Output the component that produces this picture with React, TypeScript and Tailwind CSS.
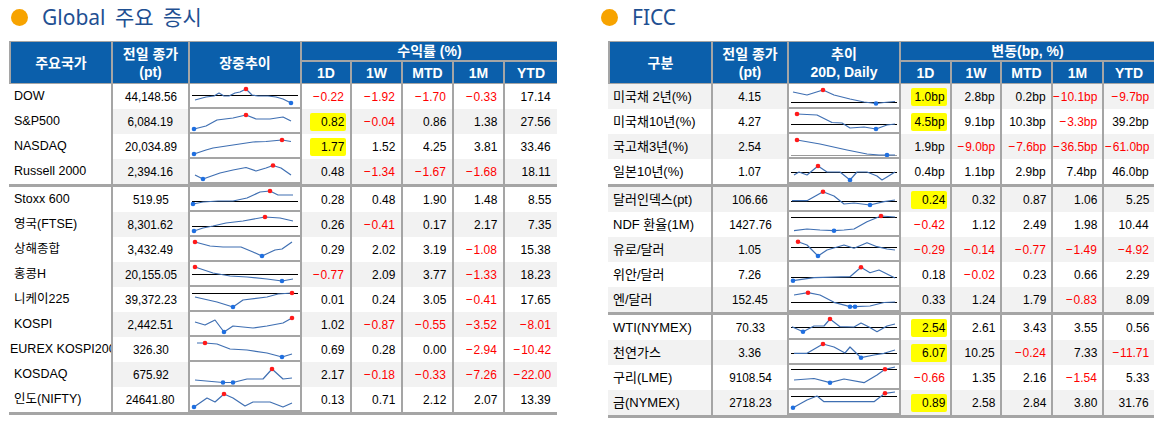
import React from 'react';

type Pt = [number, number];
type SparkDef = { axis?: number; axisGray?: boolean; pts: Pt[]; red: number[]; blue: number[] };
type Row = { name: string; price: string; spark: SparkDef; vals: string[]; hl?: boolean; tight?: boolean };

function Spark({ d }: { d: SparkDef }) {
  const pts = d.pts.map((p) => `${p[0] - 2},${p[1]}`).join(' ');
  return (
    <svg width="110" height="23" className="block">
      {d.axis !== undefined && (
        <line x1="2" x2="108" y1={Math.round(d.axis) + 0.5} y2={Math.round(d.axis) + 0.5} stroke={d.axisGray ? '#9a9a9a' : '#000'} strokeWidth="1" />
      )}
      <polyline points={pts} fill="none" stroke="#3f6fb2" strokeWidth="1.2" strokeLinejoin="round" />
      {d.red.map((i) => (
        <circle key={'r' + i} cx={d.pts[i][0] - 2} cy={d.pts[i][1]} r="2.3" fill="#ff1a1a" />
      ))}
      {d.blue.map((i) => (
        <circle key={'b' + i} cx={d.pts[i][0] - 2} cy={d.pts[i][1]} r="2.3" fill="#1f6fe0" />
      ))}
    </svg>
  );
}

function Val({ v, hl }: { v: string; hl?: boolean }) {
  const neg = v.startsWith('-');
  const body = neg ? v.slice(1) : v;
  const content = (
    <span className={`inline-block origin-right scale-x-[0.92] whitespace-nowrap ${neg ? 'text-[#ff0000]' : 'text-black'}`}>
      {neg && <span className="mr-[1px]">−</span>}
      {body}
    </span>
  );
  if (hl) {
    return (
      <span className="inline-flex justify-end bg-[#ffff00] w-[36px] h-[18px] items-center pr-[2px] -mr-[2px] rounded-[2px]">
        {content}
      </span>
    );
  }
  return content;
}

const leftRows: Row[][] = [
  [
    { name: 'DOW', price: '44,148.56', vals: ['-0.22', '-1.92', '-1.70', '-0.33', '17.14'], spark: { axis: 11, pts: [[7, 16], [18, 13], [26, 12], [31, 9], [36, 12], [41, 12], [47, 9], [52, 8], [58, 5], [64, 11], [70, 12], [80, 12], [88, 13], [95, 15], [103, 19]], red: [8], blue: [14] } },
    { name: 'S&P500', price: '6,084.19', hl: true, vals: ['0.82', '-0.04', '0.86', '1.38', '27.56'], spark: { pts: [[6, 20], [18, 17], [29, 11], [45, 9], [58, 6], [68, 10], [82, 10], [95, 8], [103, 12]], red: [4], blue: [0] } },
    { name: 'NASDAQ', price: '20,034.89', hl: true, vals: ['1.77', '1.52', '4.25', '3.81', '33.46'], spark: { pts: [[6, 20], [18, 16], [25, 14], [45, 11], [65, 8], [78, 7.5], [94, 6], [103, 7.5]], red: [6], blue: [0] } },
    { name: 'Russell 2000', price: '2,394.16', vals: ['0.48', '-1.34', '-1.67', '-1.68', '18.11'], spark: { pts: [[7, 16], [15, 20], [32, 14], [45, 11], [58, 8.5], [68, 12], [78, 9], [85, 6.5], [93, 9], [103, 16]], red: [7], blue: [1] } },
  ],
  [
    { name: 'Stoxx 600', price: '519.95', vals: ['0.28', '0.48', '1.90', '1.48', '8.55'], spark: { axis: 14, pts: [[5, 17], [15, 15], [30, 14], [45, 14], [59, 11], [72, 5], [82, 4], [90, 8], [105, 8]], red: [6], blue: [0] } },
    { name: '영국(FTSE)', price: '8,301.62', vals: ['0.26', '-0.41', '0.17', '2.17', '7.35'], spark: { axis: 14, pts: [[6, 19], [15, 16], [25, 14], [38, 11], [55, 9], [77, 5], [92, 6], [105, 9]], red: [5], blue: [0] } },
    { name: '상해종합', price: '3,432.49', vals: ['0.29', '2.02', '3.19', '-1.08', '15.38'], spark: { pts: [[7, 5], [22, 9], [35, 10], [53, 10], [65, 15], [74, 19], [87, 13], [94, 12], [104, 5]], red: [0], blue: [5] } },
    { name: '홍콩H', price: '20,155.05', vals: ['-0.77', '2.09', '3.77', '-1.33', '18.23'], spark: { axis: 12, pts: [[7, 5], [25, 11], [42, 14], [59, 15], [79, 17], [94, 19], [105, 17]], red: [0], blue: [5] } },
    { name: '니케이225', price: '39,372.23', vals: ['0.01', '0.24', '3.05', '-0.41', '17.65'], spark: { axis: 6, pts: [[7, 10], [29, 15], [45, 20], [55, 13], [79, 10], [90, 7], [104, 6]], red: [6], blue: [2] } },
    { name: 'KOSPI', price: '2,442.51', vals: ['1.02', '-0.87', '-0.55', '-3.52', '-8.01'], spark: { pts: [[7, 10], [17, 13], [27, 8], [36, 20], [45, 14], [65, 16], [79, 14], [95, 11], [104, 6]], red: [8], blue: [3] } },
    { name: 'EUREX KOSPI200', tight: true, price: '326.30', vals: ['0.69', '0.28', '0.00', '-2.94', '-10.42'], spark: { pts: [[9, 6], [17, 6], [29, 7], [42, 12], [59, 13], [79, 16], [94, 20], [104, 17]], red: [1], blue: [6] } },
    { name: 'KOSDAQ', price: '675.92', vals: ['2.17', '-0.18', '-0.33', '-7.26', '-22.00'], spark: { pts: [[7, 18], [35, 20.5], [45, 20.5], [59, 17], [75, 17], [84, 7], [95, 17], [104, 16]], red: [5], blue: [1, 2] } },
    { name: '인도(NIFTY)', price: '24641.80', vals: ['0.13', '0.71', '2.12', '2.07', '13.39'], spark: { pts: [[6, 20], [19, 11], [27, 15], [36, 7], [45, 11], [57, 19], [65, 15], [82, 15], [95, 20], [104, 16]], red: [3], blue: [0] } },
  ],
];

const rightRows: Row[][] = [
  [
    { name: '미국채 2년(%)', price: '4.15', hl: true, vals: ['1.0bp', '2.8bp', '0.2bp', '-10.1bp', '-9.7bp'], spark: { axis: 17.7, pts: [[6, 8], [20, 11], [36, 6], [47, 11], [63, 15], [77, 18], [89, 19.5], [97, 18.5], [108, 17.5]], red: [2], blue: [6] } },
    { name: '미국채10년(%)', price: '4.27', hl: true, vals: ['4.5bp', '9.1bp', '10.3bp', '-3.3bp', '39.2bp'], spark: { axis: 15, pts: [[10, 5], [30, 6], [45, 13.5], [55, 14], [63, 19], [77, 18], [89, 20], [100, 16], [108, 15]], red: [0], blue: [6] } },
    { name: '국고채3년(%)', price: '2.54', vals: ['1.9bp', '-9.0bp', '-7.6bp', '-36.5bp', '-61.0bp'], spark: { axis: 21, axisGray: true, pts: [[10, 6], [33, 10], [60, 16], [80, 20], [92, 21], [100, 21], [108, 21]], red: [0], blue: [5] } },
    { name: '일본10년(%)', price: '1.07', vals: ['0.4bp', '1.1bp', '2.9bp', '7.4bp', '46.0bp'], spark: { axis: 12.7, pts: [[7, 16], [12, 13], [20, 16], [31, 7], [40, 13], [53, 13], [63, 21], [70, 13], [80, 13], [90, 17], [95, 21], [100, 18], [108, 13]], red: [3], blue: [6] } },
  ],
  [
    { name: '달러인덱스(pt)', price: '106.66', hl: true, vals: ['0.24', '0.32', '0.87', '1.06', '5.25'], spark: { axis: 13.7, pts: [[5, 13.7], [20, 13.7], [36, 4.7], [47, 9], [57, 17], [67, 16], [83, 18], [97, 14.7], [108, 13]], red: [2], blue: [6] } },
    { name: 'NDF 환율(1M)', price: '1427.76', vals: ['-0.42', '1.12', '2.49', '1.98', '10.44'], spark: { axis: 4.7, pts: [[7, 18.7], [20, 17], [33, 18], [47, 18.7], [57, 18], [67, 17], [80, 9.7], [94, 4], [108, 5]], red: [7], blue: [3] } },
    { name: '유로/달러', price: '1.05', vals: ['-0.29', '-0.14', '-0.77', '-1.49', '-4.92'], spark: { axis: 10.3, pts: [[11, 4.7], [20, 8], [31, 19], [40, 13], [57, 8], [67, 11.3], [80, 5.7], [90, 9.7], [100, 12], [108, 13]], red: [0], blue: [2] } },
    { name: '위안/달러', price: '7.26', vals: ['0.18', '-0.02', '0.23', '0.66', '2.29'], spark: { axis: 14.7, pts: [[6, 18.7], [27, 15.7], [63, 14.7], [74, 5.3], [83, 10.7], [92, 8], [100, 12], [108, 16]], red: [3], blue: [0] } },
    { name: '엔/달러', price: '152.45', vals: ['0.33', '1.24', '1.79', '-0.83', '8.09'], spark: { axis: 15.3, pts: [[7, 8], [21, 5.7], [33, 8], [47, 15.3], [63, 19.7], [68, 19.7], [83, 19], [97, 15.5], [108, 15]], red: [1], blue: [4, 5] } },
  ],
  [
    { name: 'WTI(NYMEX)', price: '70.33', hl: true, vals: ['2.54', '2.61', '3.43', '3.55', '0.56'], spark: { axis: 11.7, pts: [[5, 11.7], [16, 16.7], [27, 11], [37, 11], [43, 4], [53, 11.7], [67, 12], [74, 8], [82, 12], [90, 16.7], [100, 11], [108, 9]], red: [4], blue: [1] } },
    { name: '천연가스', price: '3.36', hl: true, vals: ['6.07', '10.25', '-0.24', '7.33', '-11.71'], spark: { axis: 13.3, pts: [[7, 13.3], [20, 13.3], [36, 4], [47, 7], [58, 13], [63, 7], [74, 17.7], [87, 15], [97, 13.3], [108, 10]], red: [2], blue: [6] } },
    { name: '구리(LME)', price: '9108.54', vals: ['-0.66', '1.35', '2.16', '-1.54', '5.33'], spark: { axis: 4, pts: [[7, 15], [27, 13.5], [43, 17.7], [57, 14], [77, 17.7], [90, 10], [98, 4.3], [108, 2]], red: [6], blue: [2] } },
    { name: '금(NYMEX)', price: '2718.23', hl: true, vals: ['0.89', '2.58', '2.84', '3.80', '31.76'], spark: { axis: 6, pts: [[6, 17.7], [20, 10], [30, 6], [37, 11.7], [67, 11.7], [87, 11.7], [98, 3.3], [108, 2]], red: [6], blue: [0] } },
  ],
];

const NAMEF = "font-['Liberation_Sans','Noto_Sans_CJK_KR',sans-serif]";
const NUMF = "font-['Liberation_Sans',sans-serif]";

function Table({
  cols,
  groups,
  h1,
  h2,
  h3,
  h4,
  right,
}: {
  cols: string;
  groups: Row[][];
  h1: React.ReactNode;
  h2: React.ReactNode;
  h3: React.ReactNode;
  h4: string;
  right?: boolean;
}) {
  const hcell = 'flex items-center justify-center border-l-2 border-[#a5a5a5] text-white font-bold';
  let idx = -1;
  return (
    <div className="flex flex-col">
      <div className={`grid ${cols} grid-rows-[20px_21px] bg-[#0b5fab] border-t border-b border-[#a5a5a5] text-[14px] leading-[18px] ${NAMEF}`}>
        <div className={`${hcell} row-span-2`}>{h1}</div>
        <div className={`${hcell} row-span-2 flex-col`}>{h2}</div>
        <div className={`${hcell} row-span-2 flex-col`}>{h3}</div>
        <div className={`${hcell} col-span-5 border-b-2`}>{h4}</div>
        <div className={hcell}>1D</div>
        <div className={hcell}>1W</div>
        <div className={hcell}>MTD</div>
        <div className={hcell}>1M</div>
        <div className={hcell}>YTD</div>
      </div>
      {groups.map((g, gi) => (
        <React.Fragment key={gi}>
          {gi > 0 && <div className="h-[3px] bg-[#a5a5a5]" />}
          {g.map((r, ri) => {
            idx += 1;
            const stripe = right ? idx % 2 === 0 : idx % 2 === 1;
            const bg = stripe ? 'bg-[#f2f2f2]' : 'bg-white';
            return (
              <div key={ri} className={`grid ${cols} h-[25px]`}>
                <div
                  className={`flex items-center overflow-hidden whitespace-nowrap ${right ? bg : 'bg-white'} ${NAMEF} ${right ? 'text-[13px] pl-[5px]' : r.tight ? 'text-[12.5px] pl-[1px]' : 'text-[12.5px] pl-[5px]'} text-black`}
                >
                  {r.name}
                </div>
                <div className={`flex items-center justify-center border-l-2 border-[#a5a5a5] ${bg} ${NUMF} text-[13px] text-black`}>
                  <span className="inline-block scale-x-[0.9] whitespace-nowrap">{r.price}</span>
                </div>
                <div className="border-l-2 border-b-2 border-[#a5a5a5] bg-white overflow-hidden">
                  <Spark d={r.spark} />
                </div>
                {r.vals.map((v, vi) => (
                  <div
                    key={vi}
                    className={`flex items-center justify-end border-l-2 border-[#a5a5a5] ${bg} ${NUMF} text-[13px] ${right ? 'pr-[5px]' : 'pr-[6px]'}`}
                  >
                    <Val v={v} hl={vi === 0 && r.hl} />
                  </div>
                ))}
              </div>
            );
          })}
        </React.Fragment>
      ))}
      <div className="h-[3px] bg-[#a5a5a5]" />
    </div>
  );
}

function Title({ text }: { text: string }) {
  return (
    <div className="flex items-center h-[41px] pb-[6px]">
      <div className="w-[17px] h-[17px] rounded-full bg-[#f7a300] ml-[2px]" />
      <div className={`ml-[14px] text-[21px] text-[#1f5092] font-['Noto_Sans','Noto_Sans_CJK_KR',sans-serif] [word-spacing:4px]`}>{text}</div>
    </div>
  );
}

export default function App() {
  return (
    <div className="w-[1174px] h-[427px] bg-white flex">
      <div className="ml-[9px] w-[548px] flex flex-col">
        <Title text="Global 주요 증시" />
        <Table
          cols="grid-cols-[102px_77px_112px_50px_51px_51px_51px_54px]"
          groups={leftRows}
          h1="주요국가"
          h2={
            <>
              <span>전일 종가</span>
              <span>(pt)</span>
            </>
          }
          h3="장중추이"
          h4="수익률 (%)"
        />
      </div>
      <div className="ml-[42px] flex flex-col">
        <Title text="FICC" />
        <div className="ml-[9px] w-[546px]">
          <Table
            right
            cols="grid-cols-[103px_76px_112px_51px_50px_51px_51px_52px]"
            groups={rightRows}
            h1="구분"
            h2={
              <>
                <span>전일 종가</span>
                <span>(pt)</span>
              </>
            }
            h3={
              <>
                <span>추이</span>
                <span>20D, Daily</span>
              </>
            }
            h4="변동(bp, %)"
          />
        </div>
      </div>
    </div>
  );
}
